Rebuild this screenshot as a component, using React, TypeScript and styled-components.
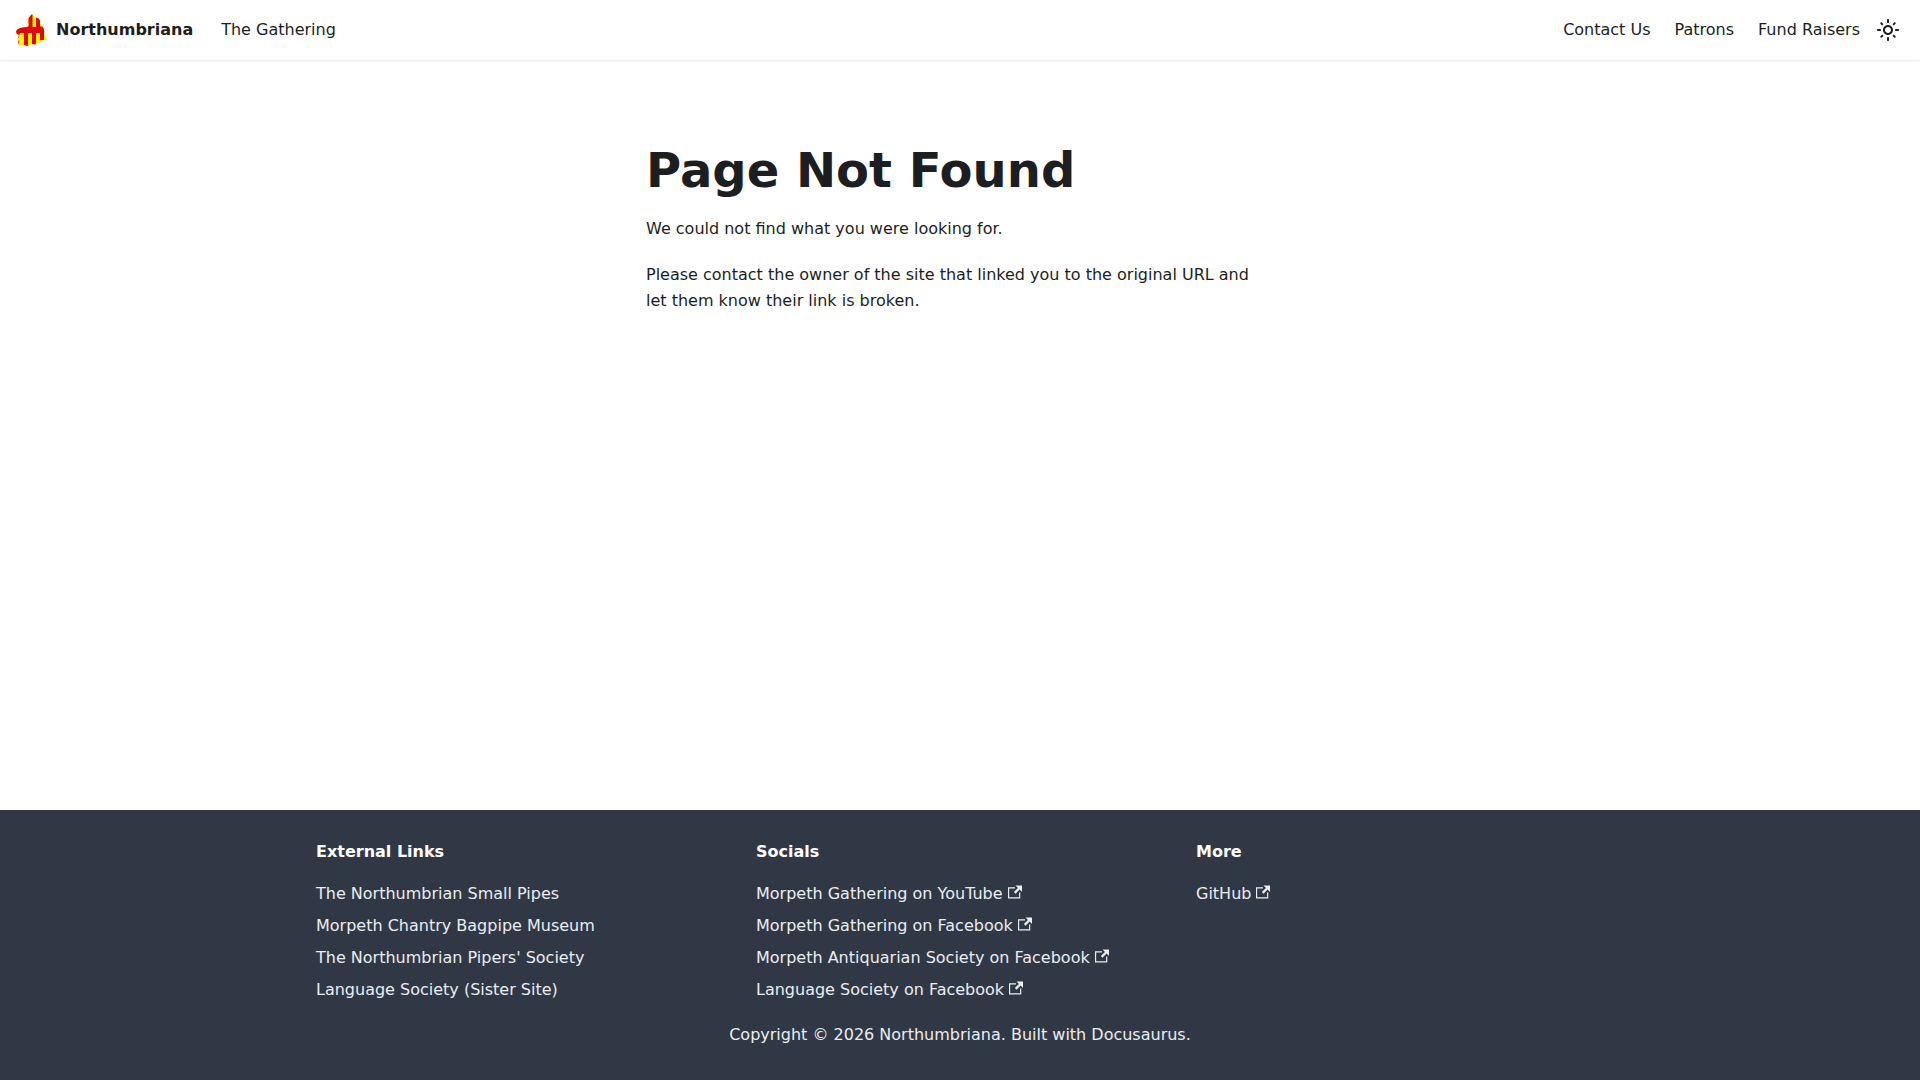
import React from "react";
import styled, { createGlobalStyle } from "styled-components";

const GlobalStyle = createGlobalStyle`
  *, *::before, *::after {
    box-sizing: border-box;
  }
  body {
    margin: 0;
    background: #ffffff;
    color: #1c1e21;
    font-family: "DejaVu Sans", sans-serif;
    font-size: 16px;
    line-height: 26px;
    text-rendering: optimizeLegibility;
    -webkit-font-smoothing: antialiased;
  }
`;

const Page = styled.div`
  display: flex;
  flex-direction: column;
  min-height: 100vh;
`;

const Navbar = styled.nav`
  display: flex;
  justify-content: space-between;
  height: 60px;
  padding: 8px 16px;
  background: #ffffff;
  box-shadow: 0 1px 2px 0 rgba(0, 0, 0, 0.1);
`;

const NavGroup = styled.div`
  display: flex;
  align-items: center;
`;

const Brand = styled.a`
  display: flex;
  align-items: center;
  gap: 8px;
  margin-right: 16px;
  color: inherit;
  font-weight: 700;
  text-decoration: none;
`;

const LogoMark = styled.svg`
  width: 32px;
  height: 32px;
`;

const NavLink = styled.a`
  padding: 4px 12px;
  color: inherit;
  text-decoration: none;

  &:hover {
    color: #25855a;
  }
`;

const ThemeToggle = styled.button`
  display: flex;
  align-items: center;
  justify-content: center;
  width: 32px;
  height: 32px;
  padding: 0;
  border: 0;
  border-radius: 50%;
  background: transparent;
  color: inherit;
  cursor: pointer;

  &:hover {
    background: #ebedf0;
  }
`;

const Main = styled.main`
  flex: 1 0 auto;
  width: 100%;
  max-width: 1320px;
  margin: 0 auto;
  padding: 80px 0;
`;

const Message = styled.div`
  width: 50%;
  margin: 0 auto;
  padding: 0 16px;
`;

const Title = styled.h1`
  margin: 0 0 16px;
  font-size: 48px;
  font-weight: 700;
  line-height: 60px;
`;

const Paragraph = styled.p`
  margin: 0 0 20px;
`;

const Footer = styled.footer`
  padding: 32px;
  background: #303846;
  color: #ebedf0;
`;

const FooterColumns = styled.div`
  display: grid;
  grid-template-columns: repeat(3, 1fr);
  max-width: 1320px;
  margin: 0 auto 16px;
`;

const FooterColumn = styled.div`
  padding: 0 16px;
`;

const FooterTitle = styled.h2`
  margin: 0 0 16px;
  color: #ffffff;
  font-size: 16px;
  font-weight: 700;
  line-height: 20px;
`;

const FooterList = styled.ul`
  margin: 0;
  padding: 0;
  list-style: none;
`;

const FooterLink = styled.a`
  color: inherit;
  line-height: 32px;
  text-decoration: none;

  &:hover {
    text-decoration: underline;
  }
`;

const ExternalMark = styled.svg`
  width: 14px;
  height: 14px;
  margin-left: 5px;
  fill: currentColor;
`;

const Copyright = styled.div`
  text-align: center;
`;

type LinkItem = { label: string; external?: boolean };

const footerColumns: { title: string; links: LinkItem[] }[] = [
  {
    title: "External Links",
    links: [
      { label: "The Northumbrian Small Pipes" },
      { label: "Morpeth Chantry Bagpipe Museum" },
      { label: "The Northumbrian Pipers' Society" },
      { label: "Language Society (Sister Site)" },
    ],
  },
  {
    title: "Socials",
    links: [
      { label: "Morpeth Gathering on YouTube", external: true },
      { label: "Morpeth Gathering on Facebook", external: true },
      { label: "Morpeth Antiquarian Society on Facebook", external: true },
      { label: "Language Society on Facebook", external: true },
    ],
  },
  { title: "More", links: [{ label: "GitHub", external: true }] },
];

/* County outline filled with the red and gold counterchanged stripes of the flag. */
function Logo() {
  return (
    <LogoMark viewBox="0 0 32 32" aria-hidden="true">
      <defs>
        <clipPath id="county">
          <path d="M16 0L17.5 1.5L19.5 3.2L22.5 4.5L24 6.5L24 9L25.5 11.5L27 13L28 16L28.6 20L29.5 23L31.5 25.5L28.5 26.5L26 26L24.5 28.5L20 29L19.5 30.5L15.5 30L12 32L8 31L3 31L2.2 28L3 25L2.2 23L3.6 21.5L2 20.5L0.5 19.5L0 17.5L1.2 15.5L4 14L8 13.3L11 13L12.5 11L12.5 9.5L10.5 9L12 6.5L12.5 4Z" />
        </clipPath>
      </defs>
      <g clipPath="url(#county)">
        <rect width="32" height="32" fill="#fff200" />
        <path
          fill="#df0812"
          d="M0 12.5H12.5V3L14.5 0H16.5V13H20V3H24V12.5H32L28 19V26H24V19H20V32H16V19H12V32H8V19H4L3 22V32H0Z"
        />
      </g>
    </LogoMark>
  );
}

function SunIcon() {
  return (
    <svg viewBox="0 0 24 24" width="24" height="24" aria-hidden="true">
      <path
        fill="currentColor"
        d="M12,9c1.65,0,3,1.35,3,3s-1.35,3-3,3s-3-1.35-3-3S10.35,9,12,9 M12,7c-2.76,0-5,2.24-5,5s2.24,5,5,5s5-2.24,5-5 S14.76,7,12,7L12,7z M2,13l2,0c0.55,0,1-0.45,1-1s-0.45-1-1-1l-2,0c-0.55,0-1,0.45-1,1S1.45,13,2,13z M20,13l2,0c0.55,0,1-0.45,1-1 s-0.45-1-1-1l-2,0c-0.55,0-1,0.45-1,1S19.45,13,20,13z M11,2v2c0,0.55,0.45,1,1,1s1-0.45,1-1V2c0-0.55-0.45-1-1-1S11,1.45,11,2z M11,20v2c0,0.55,0.45,1,1,1s1-0.45,1-1v-2c0-0.55-0.45-1-1-1C11.45,19,11,19.45,11,20z M5.99,4.58c-0.39-0.39-1.03-0.39-1.41,0 c-0.39,0.39-0.39,1.03,0,1.41l1.06,1.06c0.39,0.39,1.03,0.39,1.41,0s0.39-1.03,0-1.41L5.99,4.58z M18.36,16.95 c-0.39-0.39-1.03-0.39-1.41,0c-0.39,0.39-0.39,1.03,0,1.41l1.06,1.06c0.39,0.39,1.03,0.39,1.41,0c0.39-0.39,0.39-1.03,0-1.41 L18.36,16.95z M19.42,5.99c0.39-0.39,0.39-1.03,0-1.41c-0.39-0.39-1.03-0.39-1.41,0l-1.06,1.06c-0.39,0.39-0.39,1.03,0,1.41 s1.03,0.39,1.41,0L19.42,5.99z M7.05,18.36c0.39-0.39,0.39-1.03,0-1.41c-0.39-0.39-1.03-0.39-1.41,0l-1.06,1.06 c-0.39,0.39-0.39,1.03,0,1.41s1.03,0.39,1.41,0L7.05,18.36z"
      />
    </svg>
  );
}

function ExternalIcon() {
  return (
    <ExternalMark viewBox="0 0 24 24" aria-hidden="true">
      <path d="M21 13v10h-21v-19h12v2h-10v15h17v-8h2zm3-12h-10.988l4.035 4-6.977 7.07 2.828 2.828 6.977-7.07 4.125 4.172v-11z" />
    </ExternalMark>
  );
}

export default function App() {
  return (
    <Page>
      <GlobalStyle />
      <Navbar aria-label="Main">
        <NavGroup>
          <Brand href="#">
            <Logo />
            Northumbriana
          </Brand>
          <NavLink href="#">The Gathering</NavLink>
        </NavGroup>
        <NavGroup>
          <NavLink href="#">Contact Us</NavLink>
          <NavLink href="#">Patrons</NavLink>
          <NavLink href="#">Fund Raisers</NavLink>
          <ThemeToggle type="button" aria-label="Switch between dark and light mode">
            <SunIcon />
          </ThemeToggle>
        </NavGroup>
      </Navbar>
      <Main>
        <Message>
          <Title>Page Not Found</Title>
          <Paragraph>We could not find what you were looking for.</Paragraph>
          <Paragraph>
            Please contact the owner of the site that linked you to the original URL and let them
            know their link is broken.
          </Paragraph>
        </Message>
      </Main>
      <Footer>
        <FooterColumns>
          {footerColumns.map((column) => (
            <FooterColumn key={column.title}>
              <FooterTitle>{column.title}</FooterTitle>
              <FooterList>
                {column.links.map((link) => (
                  <li key={link.label}>
                    <FooterLink href="#">
                      {link.label}
                      {link.external && <ExternalIcon />}
                    </FooterLink>
                  </li>
                ))}
              </FooterList>
            </FooterColumn>
          ))}
        </FooterColumns>
        <Copyright>Copyright © 2026 Northumbriana. Built with Docusaurus.</Copyright>
      </Footer>
    </Page>
  );
}
